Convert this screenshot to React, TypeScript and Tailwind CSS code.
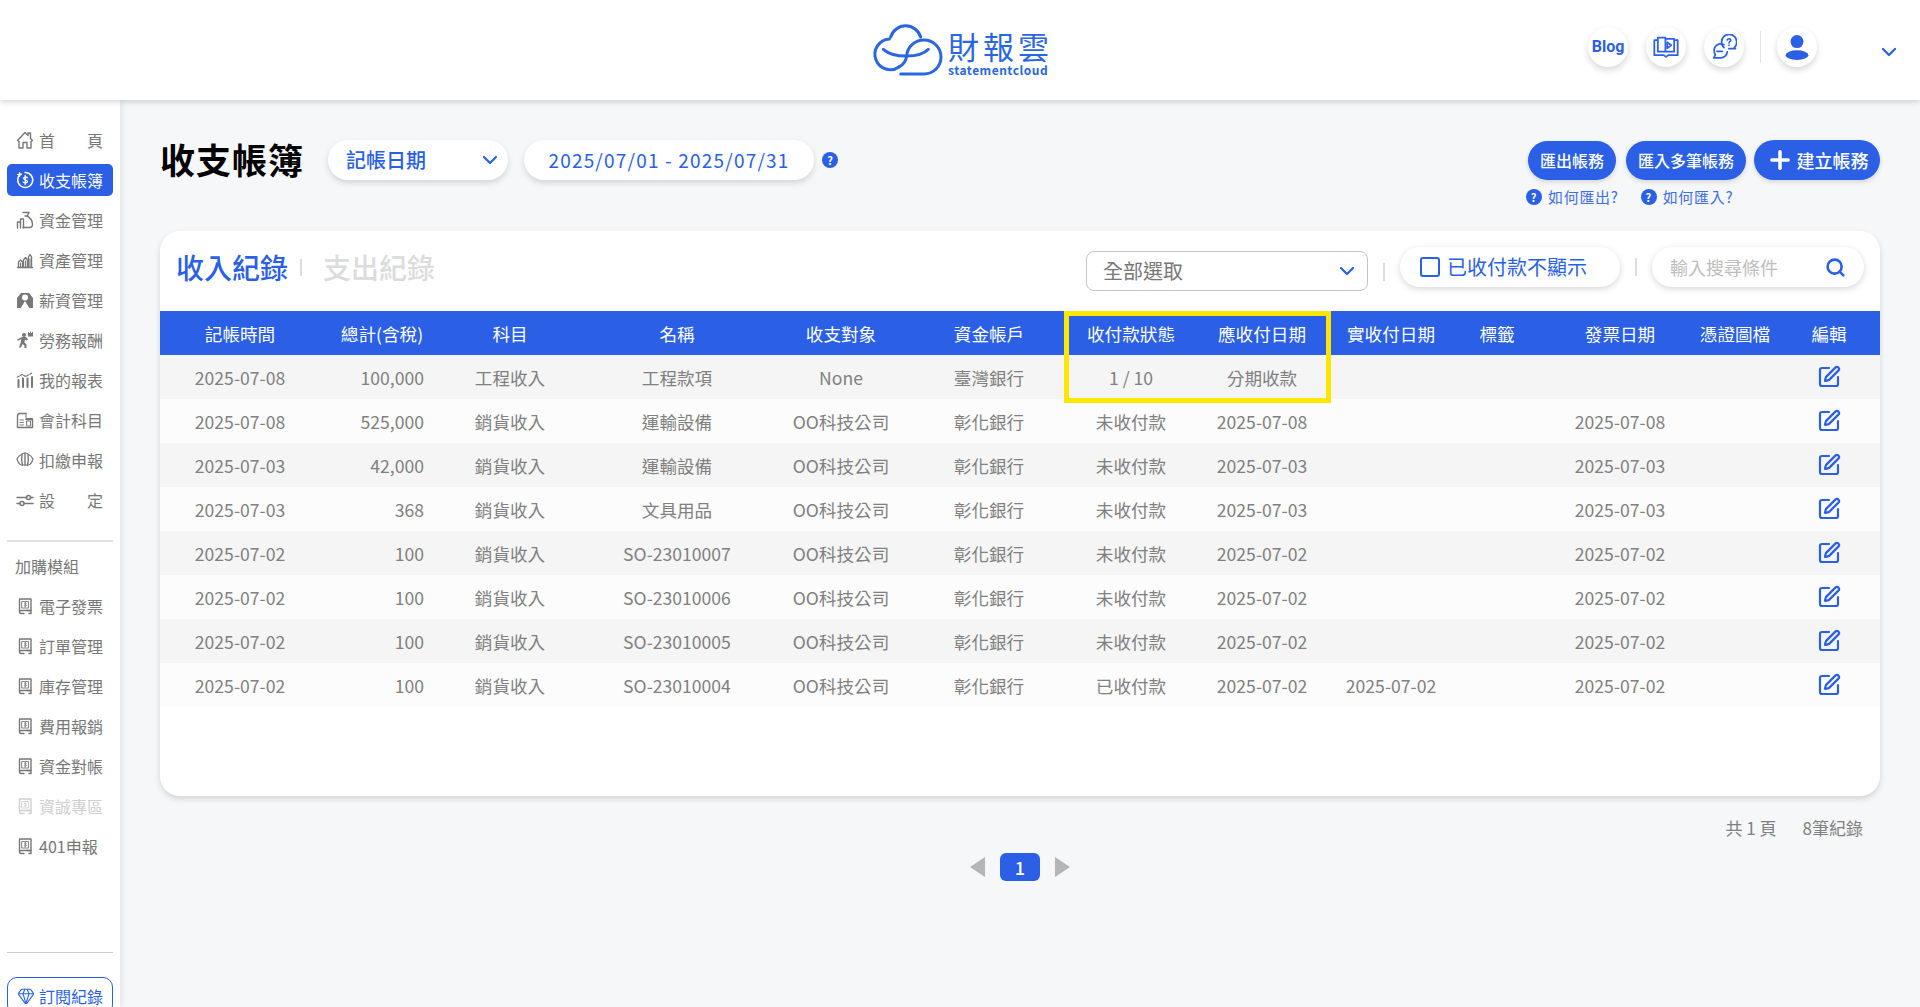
import { ChevronDown, Gem, Plus, Search, SquarePen } from "lucide-react";
import type { ReactNode } from "react";

const cols = [
  "記帳時間",
  "總計(含稅)",
  "科目",
  "名稱",
  "收支對象",
  "資金帳戶",
  "收付款狀態",
  "應收付日期",
  "實收付日期",
  "標籤",
  "發票日期",
  "憑證圖檔",
  "編輯",
];

const rows = [
  ["2025-07-08", "100,000", "工程收入", "工程款項", "None", "臺灣銀行", "1 / 10", "分期收款", "", "", ""],
  ["2025-07-08", "525,000", "銷貨收入", "運輸設備", "OO科技公司", "彰化銀行", "未收付款", "2025-07-08", "", "", "2025-07-08"],
  ["2025-07-03", "42,000", "銷貨收入", "運輸設備", "OO科技公司", "彰化銀行", "未收付款", "2025-07-03", "", "", "2025-07-03"],
  ["2025-07-03", "368", "銷貨收入", "文具用品", "OO科技公司", "彰化銀行", "未收付款", "2025-07-03", "", "", "2025-07-03"],
  ["2025-07-02", "100", "銷貨收入", "SO-23010007", "OO科技公司", "彰化銀行", "未收付款", "2025-07-02", "", "", "2025-07-02"],
  ["2025-07-02", "100", "銷貨收入", "SO-23010006", "OO科技公司", "彰化銀行", "未收付款", "2025-07-02", "", "", "2025-07-02"],
  ["2025-07-02", "100", "銷貨收入", "SO-23010005", "OO科技公司", "彰化銀行", "未收付款", "2025-07-02", "", "", "2025-07-02"],
  ["2025-07-02", "100", "銷貨收入", "SO-23010004", "OO科技公司", "彰化銀行", "已收付款", "2025-07-02", "2025-07-02", "", "2025-07-02"],
];

const gridCols =
  "grid grid-cols-[160px_124px_132px_202px_126px_170px_114px_148px_110px_102px_144px_86px_102px]";

function Icon({ children }: { children: ReactNode }) {
  return (
    <svg viewBox="0 0 20 20" className="h-5 w-5 shrink-0" fill="none" stroke="currentColor" strokeWidth="1.4" strokeLinejoin="round" strokeLinecap="round">
      {children}
    </svg>
  );
}

const moduleIcon = (
  <Icon>
    <path d="M4.500 3h11.500v11.500H6A1.500 1.500 0 0 0 4.500 16z" />
    <path d="M4.500 16A1.500 1.500 0 0 0 6 17.500h3M12 14.500h4v3h-2" />
    <path d="M7 5.500h6.500v6.500H7z" strokeWidth=".9" />
    <path d="M11.300 7.300c-1-.6-1.900-.3-1.900.4 0 1.100 2.100.7 2.100 1.800 0 .8-1 1-2.200.5M10.300 6.500v4.500" strokeWidth=".8" />
  </Icon>
);

const icons: Record<string, ReactNode> = {
  home: (
    <Icon>
      <path d="M2.500 10.500 10 2.500l3 3V3h2.500v5.500l2 2-1.500 1V18h-4v-5.500H8V18H4v-6.500z" />
    </Icon>
  ),
  ledger: (
    <Icon>
      <path d="M6 3.800A7.500 7.500 0 1 0 10 2.500" strokeWidth="1.500" />
      <path d="M2.500 4.500h4M4.500 2.500v4" strokeWidth="1.200" />
      <path d="M12.300 7.600c-1.500-1-3.700-.7-3.700.7 0 1.900 3.800 1.200 3.800 3.200 0 1.400-2.300 1.700-4 .7M10.200 5.500v9" strokeWidth="1.300" />
    </Icon>
  ),
  funds: (
    <Icon>
      <path d="M8 2.500h6l-2 3.500c3 1.500 5.500 5 5.500 8.500 0 2-1.500 3-3 3H8" />
      <path d="M10 6h3M2.500 18v-6h3v6M5.500 18v-9h3v9" />
    </Icon>
  ),
  assets: (
    <Icon>
      <path d="M2.500 17.500h15M3.500 17v-5l2-2 2 2v5M8.500 17v-7l2-2.500 2 2.500v7M13.500 17V7l1.500-2.500L16.500 7v10" />
      <path d="M5.500 13v4M10.500 11v6M15 9v8" strokeWidth="1" />
    </Icon>
  ),
  salary: (
    <svg viewBox="0 0 20 20" className="h-5 w-5 shrink-0" fill="currentColor">
      <path d="M2 18V8l4-5h8l4 5v10h-4l-4-7-4 7z" />
      <circle cx="10" cy="7.500" r="3" fill="#fff" />
      <path d="M6 17.500 10 12l4 5.500z" fill="#fff" />
    </svg>
  ),
  labor: (
    <svg viewBox="0 0 20 20" className="h-5 w-5 shrink-0" fill="currentColor">
      <circle cx="9" cy="5" r="2" />
      <path d="M2 9.500 7 7h4l2 2.500-1.500 1-1.500-1-.5 3 2 2v3.500H9.500v-2.500l-2-1.500L6 17.500H4l2-6 .3-2.500-3.300 1.700z" />
      <path d="M13 2h1v1h1V1.500h1V3h1V2h1v4.500h-5z" />
    </svg>
  ),
  report: (
    <Icon>
      <path d="M3.500 10v7M8 8.500V17M12.500 8.500V17M17 7v10" strokeWidth="2" />
      <path d="M2.500 7 7 4.500 11 6.500 17 3" strokeWidth="1.300" strokeDasharray="2 1.500" />
    </Icon>
  ),
  account: (
    <Icon>
      <path d="M11 3.500H5A2.500 2.500 0 0 0 2.500 6v11.500h15V9.500h-6.500" />
      <path d="M11 3.500V8.500h6.500" strokeWidth="1" />
      <path d="M5 10h3.500M5 12.500h3.500M5 15h3.500M12 11h3.500v5H12z" strokeWidth="1" />
    </Icon>
  ),
  tax: (
    <Icon>
      <path d="M2 9c1.500-3 3-4 4.500-4.500C7 3.500 8 3 10 3s3 .5 3.500 1.500C15 5 16.500 6 18 9c-1 3.500-3 5.500-4.500 6h-7C5 14.500 3 12.500 2 9z" strokeWidth="1.200" />
      <path d="M7 4.500c-.5 3-.5 7.500.5 10.500M10 3v12M13 4.500c.5 3 .5 7.500-.5 10.500" strokeWidth="1.400" />
    </Icon>
  ),
  settings: (
    <Icon>
      <path d="M2 7.500h9.500M15.500 7.500H18M2 13.500h3M9 13.500h9" strokeWidth="1.500" />
      <circle cx="13.500" cy="7.500" r="2" strokeWidth="1.500" />
      <circle cx="7" cy="13.500" r="2" strokeWidth="1.500" />
    </Icon>
  ),
  module: moduleIcon,
};

const mainNav = [
  ["home", "首", "頁"],
  ["ledger", "收支帳簿"],
  ["funds", "資金管理"],
  ["assets", "資產管理"],
  ["salary", "薪資管理"],
  ["labor", "勞務報酬"],
  ["report", "我的報表"],
  ["account", "會計科目"],
  ["tax", "扣繳申報"],
  ["settings", "設", "定"],
];

const addOns = ["電子發票", "訂單管理", "庫存管理", "費用報銷", "資金對帳", "資誠專區", "401申報"];

function NavItem({ icon, label, end, active, faded }: { icon: string; label: string; end?: string; active?: boolean; faded?: boolean }) {
  return (
    <div className="flex h-10 shrink-0 items-center">
      <div
        className={`flex h-8 w-full items-center gap-[4px] rounded-[5px] pl-2 text-base ${
          active ? "bg-[#2a5fe6] text-white" : faded ? "text-[#cfcfcf]" : "text-[#777777]"
        }`}
      >
        {icons[icon]}
        {end ? (
          <span className="flex w-16 justify-between">
            <span>{label}</span>
            <span>{end}</span>
          </span>
        ) : (
          <span className="whitespace-nowrap">{label}</span>
        )}
      </div>
    </div>
  );
}

function Sidebar() {
  return (
    <aside className="flex w-[120px] shrink-0 flex-col bg-white px-[7px] pt-5 shadow-[2px_0_6px_rgba(0,0,0,0.08)]">
      {mainNav.map(([icon, label, end]) => (
        <NavItem key={label} icon={icon} label={label} end={end} active={label === "收支帳簿"} />
      ))}
      <div className="mt-5 h-[2px] shrink-0 bg-[#e0e0e0]" />
      <div className="mt-[4px] flex h-10 shrink-0 items-center pl-2 text-base text-[#777777]">加購模組</div>
      {addOns.map((label) => (
        <NavItem key={label} icon="module" label={label} faded={label === "資誠專區"} />
      ))}
      <div className="mt-[86px] h-px shrink-0 bg-[#cccccc]" />
      <div className="mt-[24px] flex h-[38px] shrink-0 items-center gap-[4px] rounded-[10px] border border-[#2a5fe6] pl-[9px] text-base text-[#2a5fe6]">
        <Gem className="h-[18px] w-[18px]" strokeWidth={1.4} />
        訂閱紀錄
      </div>
    </aside>
  );
}

function Logo() {
  return (
    <div className="flex items-center gap-[7px]">
      <svg viewBox="0 0 213 150" className="h-[50px] w-[71px] overflow-visible" fill="none" stroke="#2a66e0" strokeWidth="9" strokeLinecap="round">
        <path d="M58 42A46 46 0 1 0 88 125" />
        <path d="M62 36A47 47 0 0 1 152 36" />
        <path d="M92 147H162A51 51 0 0 0 162 45A52 52 0 0 0 110 92C108 112 98 120 88 125" />
        <path d="M40 73C70 100 150 100 175 73" />
      </svg>
      <div className="mt-[3px] flex flex-col items-start text-[#2a66e0]">
        <span className="text-[31px] leading-[35px] tracking-[4px]">財報雲</span>
        <span className="text-[12px] leading-[13px] font-bold tracking-[0.5px]">statementcloud</span>
      </div>
    </div>
  );
}

function RoundButton({ children }: { children: ReactNode }) {
  return (
    <div className="flex h-10 w-10 items-center justify-center rounded-full bg-white text-[#2a5fe6] shadow-[0_3px_6px_rgba(0,0,0,0.16)]">
      {children}
    </div>
  );
}

function TopBar() {
  return (
    <header className="relative z-10 flex h-[100px] shrink-0 items-center bg-white shadow-[0_2px_6px_rgba(0,0,0,0.16)]">
      <div className="w-[870px] shrink-0" />
      <Logo />
      <div className="ml-auto flex items-center">
        <div className="flex gap-[18px] pb-[6px]">
          <RoundButton>
            <span className="font-['Roboto',sans-serif] text-[16px] font-bold">Blog</span>
          </RoundButton>
          <RoundButton>
            <svg viewBox="0 0 24 24" className="h-7 w-7" fill="none" stroke="currentColor" strokeWidth="1.500" strokeLinejoin="round">
              <path d="M5 6H2v13h8l2 1.500 2-1.500h8V6h-3" />
              <path d="M5 4h6.500v12H5zM11.500 5H19v11h-7.500z" />
              <path d="m13 8 3.500 2.500-3.500 2.500z" />
            </svg>
          </RoundButton>
          <RoundButton>
            <svg viewBox="0 0 24 24" className="h-[26px] w-[26px]" fill="none" stroke="currentColor" strokeWidth="1.600" strokeLinejoin="round" strokeLinecap="round">
              <path d="M12 12.500a7 7 0 1 1 9.500 0l1 1h-6" />
              <path d="M12 10A6 6 0 0 0 3 16c0 1.200.4 2.300 1 3.200L2.500 22H9a6 6 0 0 0 6-5.500" />
              <path d="M5.500 16h5" />
              <path d="M15 5.500c.3-1.400 3.200-1.500 3.200.2 0 1.200-1.600 1.300-1.600 2.600M16.600 10.300v.2" strokeWidth="1.500" />
            </svg>
          </RoundButton>
        </div>
        <div className="mx-4 mb-[6px] h-8 w-px bg-[#e5e5e5]" />
        <div className="pb-[6px]">
          <RoundButton>
            <svg viewBox="0 0 24 24" className="h-[26px] w-[26px]" fill="currentColor">
              <circle cx="12" cy="7" r="6" />
              <ellipse cx="12" cy="19.500" rx="10.500" ry="4.500" />
            </svg>
          </RoundButton>
        </div>
        <ChevronDown className="mt-[4px] mr-[19px] ml-[60px] h-6 w-6 text-[#2a5fe6]" strokeWidth={2.2} />
      </div>
    </header>
  );
}

function HelpLink({ label }: { label: string }) {
  return (
    <span className="flex items-center gap-[6px] text-[15px] tracking-[0.7px] text-[#3f6ee6]">
      <span className="flex h-4 w-4 items-center justify-center rounded-full bg-[#2a5fe6] text-[11px] font-bold text-white">?</span>
      {label}
    </span>
  );
}

function Toolbar() {
  return (
    <div className="flex h-[91px] shrink-0 items-start justify-between">
      <div className="flex h-10 items-center">
        <h1 className="mb-[2px] w-[168px] text-[35px] font-bold tracking-[1px] text-black">收支帳簿</h1>
        <div className="flex h-10 w-[180px] items-center justify-between rounded-full bg-white pr-[6px] pl-[18px] text-xl font-medium text-[#2a5fe6] shadow-[0_3px_6px_rgba(0,0,0,0.14)]">
          記帳日期
          <ChevronDown className="h-6 w-6" strokeWidth={2.2} />
        </div>
        <div className="ml-4 flex h-10 w-[290px] items-center justify-center rounded-full bg-white text-[19px] tracking-[1.2px] text-[#2a5fe6] shadow-[0_3px_6px_rgba(0,0,0,0.14)]">
          2025/07/01 - 2025/07/31
        </div>
        <span className="ml-[8px] flex h-4 w-4 items-center justify-center rounded-full bg-[#2a5fe6] text-[11px] font-bold text-white">?</span>
      </div>
      <div className="flex flex-col items-end">
        <div className="flex items-center">
          <div className="flex h-[39px] w-[88px] items-center justify-center rounded-full bg-[#2a5fe6] text-base font-medium text-white shadow-[0_2px_5px_rgba(0,0,0,0.14)]">匯出帳務</div>
          <div className="ml-[10px] flex h-[39px] w-[120px] items-center justify-center rounded-full bg-[#2a5fe6] text-base font-medium text-white shadow-[0_2px_5px_rgba(0,0,0,0.14)]">匯入多筆帳務</div>
          <div className="ml-2 flex h-10 w-[126px] items-center justify-center gap-[3px] rounded-full bg-[#2a5fe6] text-lg font-medium text-white shadow-[0_2px_5px_rgba(0,0,0,0.14)]">
            <Plus className="h-7 w-7" strokeWidth={3} />
            建立帳務
          </div>
        </div>
        <div className="mt-[6px] flex w-[354px] gap-[22px]">
          <HelpLink label="如何匯出?" />
          <HelpLink label="如何匯入?" />
        </div>
      </div>
    </div>
  );
}

function CardHead() {
  return (
    <div className="flex h-20 items-center">
      <div className="mb-2 ml-4 flex items-center text-[28px] font-medium">
        <span className="text-[#2a5fe6]">收入紀錄</span>
        <span className="ml-3 h-[17px] w-[2px] bg-[#dddddd]" />
        <span className="ml-[21px] text-[#dcdcdc]">支出紀錄</span>
      </div>
      <div className="ml-auto flex items-center">
        <div className="flex h-10 w-[282px] items-center justify-between rounded-[8px] border border-[#c4c4c4] pr-2 pl-4 text-xl text-[#777777]">
          全部選取
          <ChevronDown className="h-6 w-6 text-[#2a5fe6]" strokeWidth={2.2} />
        </div>
        <div className="mx-[15px] mt-[2px] h-[18px] w-[2px] bg-[#dddddd]" />
        <div className="mb-2 flex h-10 w-[220px] items-center gap-[7px] rounded-full bg-white pl-5 text-xl text-[#2a5fe6] shadow-[0_2px_6px_rgba(0,0,0,0.16)]">
          <span className="h-[20px] w-[20px] rounded-[3px] border-2 border-[#2a5fe6]" />
          已收付款不顯示
        </div>
        <div className="mx-[15px] mb-2 h-[18px] w-[2px] bg-[#dddddd]" />
        <div className="mr-4 mb-2 flex h-10 w-[212px] items-center justify-between rounded-full bg-white pr-[18px] pl-[18px] text-lg text-[#bdbdbd] shadow-[0_2px_6px_rgba(0,0,0,0.16)]">
          輸入搜尋條件
          <Search className="h-[21px] w-[21px] text-[#2a5fe6]" strokeWidth={3} />
        </div>
      </div>
    </div>
  );
}

function LedgerTable() {
  return (
    <div className="text-[17.6px]">
      <div className={`${gridCols} h-11 items-center bg-[#2a5fe6] pt-[2px] text-center text-white`}>
        {cols.map((c) => (
          <div key={c}>{c}</div>
        ))}
      </div>
      {rows.map((r, i) => (
        <div key={i} className={`${gridCols} h-11 items-center pt-[2px] text-center text-[#808080] ${i % 2 ? "bg-[#fcfcfc]" : "bg-[#f5f5f5]"}`}>
          <div>{r[0]}</div>
          <div className="pr-5 text-right">{r[1]}</div>
          {r.slice(2).map((v, j) => (
            <div key={j}>{v}</div>
          ))}
          <div />
          <div className="flex justify-center pb-[3px] text-[#2a5fe6]">
            <SquarePen className="h-6 w-6" strokeWidth={2.2} />
          </div>
        </div>
      ))}
    </div>
  );
}

export default function App() {
  return (
    <div className="flex h-screen flex-col overflow-hidden bg-[#f6f7f9] font-['Noto_Sans_CJK_TC','Noto_Sans',sans-serif]">
      <TopBar />
      <div className="flex min-h-0 flex-1">
        <Sidebar />
        <main className="min-w-0 flex-1 px-10 pt-10">
          <Toolbar />
          <section className="relative h-[565px] rounded-[20px] bg-white shadow-[0_3px_6px_rgba(0,0,0,0.14)]">
            <CardHead />
            <LedgerTable />
            <div className="absolute top-20 left-[904px] h-[92px] w-[267px] border-[5px] border-[#ffe600]" />
          </section>
          <div className="mt-[19px] flex justify-end gap-[26px] pr-[17px] text-[17px] text-[#808080]">
            <span>共 1 頁</span>
            <span>8筆紀錄</span>
          </div>
          <div className="mt-[12px] ml-[810px] flex items-center gap-[15px]">
            <span className="h-0 w-0 border-y-[10px] border-r-[15px] border-y-transparent border-r-[#b5b5b5]" />
            <span className="flex h-7 w-10 items-center justify-center rounded-[6px] bg-[#2a5fe6] text-lg font-medium text-white">1</span>
            <span className="h-0 w-0 border-y-[10px] border-l-[15px] border-y-transparent border-l-[#b5b5b5]" />
          </div>
        </main>
      </div>
    </div>
  );
}
